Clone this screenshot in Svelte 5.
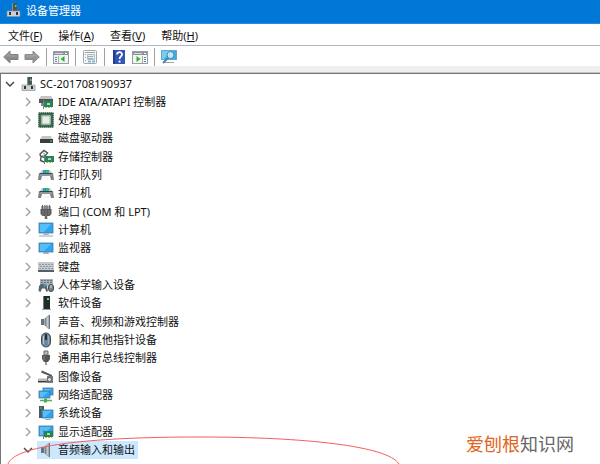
<script lang="ts">
  type Device = { icon: string; label: string };

  const menus = [
    { text: '文件', key: 'F' },
    { text: '操作', key: 'A' },
    { text: '查看', key: 'V' },
    { text: '帮助', key: 'H' }
  ];

  const toolGroups = [
    [
      { icon: 'back', label: '后退' },
      { icon: 'forward', label: '前进' }
    ],
    [{ icon: 'console', label: '显示/隐藏控制台树' }],
    [{ icon: 'properties', label: '属性' }],
    [
      { icon: 'help', label: '帮助' },
      { icon: 'action', label: '显示/隐藏操作窗格' }
    ],
    [{ icon: 'scan', label: '扫描检测硬件改动' }]
  ];

  const devices: Device[] = [
    { icon: 'ide', label: 'IDE ATA/ATAPI 控制器' },
    { icon: 'cpu', label: '处理器' },
    { icon: 'disk', label: '磁盘驱动器' },
    { icon: 'storage', label: '存储控制器' },
    { icon: 'printer', label: '打印队列' },
    { icon: 'printer', label: '打印机' },
    { icon: 'port', label: '端口 (COM 和 LPT)' },
    { icon: 'computer', label: '计算机' },
    { icon: 'monitor', label: '监视器' },
    { icon: 'keyboard', label: '键盘' },
    { icon: 'hid', label: '人体学输入设备' },
    { icon: 'software', label: '软件设备' },
    { icon: 'speaker', label: '声音、视频和游戏控制器' },
    { icon: 'mouse', label: '鼠标和其他指针设备' },
    { icon: 'usb', label: '通用串行总线控制器' },
    { icon: 'imaging', label: '图像设备' },
    { icon: 'network', label: '网络适配器' },
    { icon: 'system', label: '系统设备' },
    { icon: 'display', label: '显示适配器' },
    { icon: 'speaker', label: '音频输入和输出' }
  ];

  const audio = devices.length - 1;

  let selected = $state(audio);
  let rootOpen = $state(true);
  let audioOpen = $state(true);

  function toggle(index: number) {
    selected = index;
    if (index === audio) audioOpen = !audioOpen;
  }
</script>

{#snippet chevron(open: boolean)}
  <svg class="chevron" class:open viewBox="0 0 10 10" aria-hidden="true">
    {#if open}
      <path d="M1 3l4 4 4-4" />
    {:else}
      <path d="M3 1l4 4-4 4" />
    {/if}
  </svg>
{/snippet}

{#snippet toolIcon(name: string)}
  <svg class="tool-icon" viewBox="0 0 16 16" aria-hidden="true">
    {#if name === 'back'}
      <path d="M.7 8L7 2v3.5h8v5H7V14z" fill="#8b8b8b" stroke="#808080" />
      <path d="M2.5 8L6 4.7V7h8" fill="none" stroke="#a5a5a5" />
    {:else if name === 'forward'}
      <path d="M15.3 8L9 2v3.5H1v5h8V14z" fill="#949494" stroke="#898989" />
      <path d="M2 7h8V4.7L13.5 8" fill="none" stroke="#adadad" />
    {:else if name === 'console' || name === 'action'}
      <rect x=".5" y="2.5" width="15" height="12" fill="#f4f4f2" stroke="#9b9ea0" />
      <path d="M1 3h14v3H1z" fill="#8d9499" />
      <path d="M2 4.5h8" stroke="#d5dade" />
      <path d="M12 4.5h2" stroke="#fff" />
      {#if name === 'console'}
        <path d="M5.5 7v7" stroke="#aaa" />
        <path d="M2 8.5h2M2 10.5h2M2 12.5h2" stroke="#4e88bd" />
        <path d="M11.5 7v6L7.5 10z" fill="#28b52b" />
      {:else}
        <path d="M10.5 7v7" stroke="#aaa" />
        <path d="M12 8.5h2M12 10.5h2M12 12.5h2" stroke="#4e88bd" />
        <path d="M4.5 7v6l4-3z" fill="#28b52b" />
      {/if}
    {:else if name === 'properties'}
      <rect x="1.5" y="1.5" width="13" height="13" rx="1" fill="#f8f8f8" stroke="#a2a7a9" />
      <path d="M3 3.5h10M3 5.5h1M3 8.5h1M3 11.5h1" stroke="#9aa6ac" />
      <path d="M5.5 5.5h7v5h-7z" fill="#e3edf2" stroke="#b4bdc2" />
      <path d="M6 7.5h5M6 9.5h5" stroke="#a0aab0" />
      <path d="M6 12.5h3M10 12.5h3" stroke="#6fc0e3" stroke-width="2" />
    {:else if name === 'help'}
      <path d="M2 1h12v14H2z" fill="#3155b7" />
      <path d="M2 1h2v14H2z" fill="#233c8c" />
      <path d="M6 5.5C6 2.4 11.3 2.5 11 5.6 10.8 7.6 8.6 7.2 8.6 10M8.6 11.5v2" fill="none" stroke="#fff" stroke-width="1.8" />
    {:else}
      <path d="M.5 1.5h15v9H.5z" fill="#3caee5" stroke="#6ba4bf" />
      <path d="M1 2h9l-7 8H1z" fill="#75cdf2" />
      <path d="M3 13.5h10" stroke="#9aa9b0" />
      <path d="M7 9l-5 5" stroke="#418ab0" stroke-width="2" />
      <circle cx="9.5" cy="6" r="3.5" fill="#bce7fa" stroke="#438daf" />
    {/if}
  </svg>
{/snippet}

{#snippet screen(x: number, y: number, w: number, h: number)}
  <rect {x} {y} width={w} height={h} fill="#2ea4ee" stroke="#47799b" stroke-width=".8" />
  <path d="M{x + 1} {y + 1}h{w - 3}l{-w / 2} {h - 2}H{x + 1}z" fill="#58bdfb" />
{/snippet}

{#snippet card(x: number, y: number)}
  <path d="M{x} {y}h9v6H{x}z" fill="#26835b" />
  <path d="M{x - .5} {y - 1}v9" stroke="#71817b" />
  <path d="M{x + 3} {y + 2}h3v2h-3z" fill="#a6d9b4" />
  <path d="M{x + 1} {y + 6.5}h7" stroke="#d5ab42" stroke-dasharray="2 1" />
{/snippet}

{#snippet deviceIcon(name: string)}
  <svg class="device-icon" viewBox="0 0 16 16" aria-hidden="true">
    {#if name === 'root'}
      <path d="M7 1h5v9H7z" fill="#4d5357" />
      <path d="M7.5 1v9" stroke="#8b9295" />
      <path d="M10 3h1.5v2H10z" fill="#48db6d" />
      <path d="M2 9h13v5.5H2z" fill="#ced1d3" stroke="#8c9194" stroke-width=".7" />
      <path d="M4 10h2v3H4zM11 10h2v3h-2z" fill="#303538" />
    {:else if name === 'ide'}
      <path d="M3 2h10l2 3H1z" fill="#c2c5c4" />
      <path d="M1 5h14v4H1z" fill="#505653" />
      <path d="M3 9h4v3H3z" fill="#858b88" />
      {@render card(6, 7)}
    {:else if name === 'cpu'}
      <rect x="2" y="2" width="12" height="12" fill="#dfe4df" stroke="#3e6e50" stroke-width="3" />
      <rect x="1" y="1" width="14" height="14" fill="none" stroke="#284f36" stroke-dasharray="1 1" />
      <rect x="4" y="4" width="8" height="8" fill="#e9ecea" stroke="#a5bbaa" />
    {:else if name === 'disk'}
      <path d="M4 6h9l2 4H2z" fill="#c4c5c5" />
      <path d="M2 9h13v4H2z" fill="#3b3e40" />
      <path d="M12 11h2" stroke="#50dd6c" />
    {:else if name === 'storage'}
      <path d="M2 5l4-3.5L9.5 4 6 8.5 2.5 7zM3 8l-.5 3.5L6 13" fill="none" stroke="#4c5351" stroke-width="1.4" />
      <path d="M5 4l2 1-3 2" fill="none" stroke="#a0a6a4" />
      {@render card(7, 7)}
    {:else if name === 'printer'}
      <path d="M4 3h8l2 3H2z" fill="#c3c8c9" />
      <path d="M5 3h3v3H5z" fill="#2698de" />
      <path d="M8 3h3v3H8z" fill="#34b96b" />
      <path d="M1 6h14l1 7h-3l-1-4H4l-1 4H0z" fill="#7b8184" />
      <path d="M2 6h12v1H2z" fill="#3d4447" />
      <path d="M2 8h12" stroke="#a9afb1" />
      <path d="M4.5 9.500h7l1 3.500h-9z" fill="#f8f8f8" />
    {:else if name === 'port'}
      <path d="M3 2h10v3H3z" fill="#aaa" />
      <path d="M4.5 1v4M7 1v4M9 1v4M11.5 1v4" stroke="#626262" />
      <path d="M2.5 5h11v5l-2 2h-7l-2-2z" fill="#5b5b5b" />
      <path d="M5 6v5M8 6v6M11 6v5" stroke="#7c7c7c" />
      <path d="M8 12v3" stroke="#666" stroke-width="2.5" />
    {:else if name === 'computer'}
      {@render screen(1, 1, 14, 10)}
      <path d="M6 11h4l1 2H5z" fill="#a6b4bd" />
      <path d="M1 14h14" stroke="#8ba9bd" />
    {:else if name === 'monitor'}
      {@render screen(1, 3, 14, 9)}
      <path d="M6 12h4l1 2H5z" fill="#9eacb5" />
    {:else if name === 'keyboard'}
      <path d="M0 3h16v8H0z" fill="#c5cacf" />
      <path d="M1 5.5h14M2 7.5h13M1 9.5h14" stroke="#929ba3" stroke-dasharray="2 1" />
      <path d="M0 11h16v2H0z" fill="#555f67" />
    {:else if name === 'hid'}
      <path d="M2 2h13v7H2z" fill="#a9b0b5" />
      <path d="M3 3.5h11M3 5.5h11" stroke="#6b757c" stroke-dasharray="2 1" />
      <path d="M1 9l2-2h4l2 2 1 5-1.5 1L7 11.5H4L2.5 15 .5 14z" fill="#5b6269" />
      <rect x="10.5" y="7.5" width="5" height="7" rx="2.5" fill="#75818b" stroke="#434b52" />
      <path d="M5 6l3 2-2 3z" fill="#2aa8db" />
      <path d="M13 8v3" stroke="#dfe5e9" />
    {:else if name === 'software'}
      <path d="M5 1h7v13H5z" fill="#262c2a" />
      <path d="M5 1h1v13H5z" fill="#777d7b" />
      <path d="M9 3h2v2H9z" fill="#45e36c" />
      <path d="M4 14.5h9" stroke="#9da2a0" />
    {:else if name === 'speaker'}
      <path d="M3 5h3v6H3z" fill="#67747b" />
      <path d="M6 5l5-4.5v15L6 11z" fill="#a3adb3" />
      <path d="M7.5 4v8" stroke="#7c878d" />
      <path d="M11.5 1v14" stroke="#68747b" />
      <path d="M9.5 3v10" stroke="#c2c9cd" />
    {:else if name === 'mouse'}
      <rect x="3.5" y="1" width="9" height="14" rx="4.5" fill="#71879a" stroke="#3f4d58" />
      <path d="M5.5 4v8" stroke="#b8cad8" />
      <path d="M8 2v6" stroke="#26323b" stroke-width="2" />
      <path d="M10.5 4v8" stroke="#96a8b6" />
    {:else if name === 'usb'}
      <path d="M6 1h4v4H6z" fill="#bbb" stroke="#666" />
      <path d="M4 5h8v4l-2 3H6L4 9z" fill="#555" />
      <path d="M6 6v4" stroke="#858585" />
      <path d="M8 12v3" stroke="#777" stroke-width="1.5" />
    {:else if name === 'imaging'}
      <path d="M4 1.5L14 6v2L3 3.5z" fill="#54595b" />
      <path d="M0 9.5h9V13H0z" fill="#b5b9ba" />
      <path d="M0 12h10v1.5H0z" fill="#383d3f" />
      <path d="M9 7h6v7H9z" fill="#747b7e" />
      <circle cx="11.5" cy="10.5" r="2" fill="#e1e5e6" stroke="#555b5e" />
    {:else if name === 'network'}
      {@render screen(5, 1, 10, 7)}
      {@render screen(1, 4, 11, 7)}
      <path d="M2 13.5h12" stroke="#50ac61" stroke-width="1.5" />
      <path d="M6 11.5h3v4H6z" fill="#4aaa54" />
    {:else if name === 'system'}
      <path d="M1 1h5v12H1z" fill="#4c5960" />
      <path d="M2 3h2" stroke="#52cf73" />
      {@render screen(4, 5, 11, 8)}
      <path d="M7 14.5h6" stroke="#98aeb9" />
    {:else if name === 'display'}
      {@render screen(1, 2, 14, 10)}
      {@render card(6, 7)}
    {/if}
  </svg>
{/snippet}

<div class="window">
  <header class="title-bar">
    {@render deviceIcon('root')}
    <h1>设备管理器</h1>
  </header>

  <nav class="menu-bar">
    {#each menus as menu}
      <button>{menu.text}(<u>{menu.key}</u>)</button>
    {/each}
  </nav>

  <div class="toolbar" role="toolbar" aria-label="工具栏">
    {#each toolGroups as group}
      <div class="tool-group">
        {#each group as tool}
          <button aria-label={tool.label} title={tool.label}>{@render toolIcon(tool.icon)}</button>
        {/each}
      </div>
    {/each}
  </div>

  <main>
    <button class="row root" onclick={() => (rootOpen = !rootOpen)}>
      {@render chevron(rootOpen)}
      <span class="item">
        {@render deviceIcon('root')}
        <span>SC-201708190937</span>
      </span>
    </button>
    {#if rootOpen}
      <ul>
        {#each devices as device, i}
          <li>
            <button class="row" class:selected={selected === i} onclick={() => toggle(i)}>
              {@render chevron(i === audio && audioOpen)}
              <span class="item">
                {@render deviceIcon(device.icon)}
                <span>{device.label}</span>
              </span>
            </button>
          </li>
        {/each}
      </ul>
    {/if}
  </main>

  <svg class="marker" viewBox="0 0 400 30" aria-hidden="true">
    <path d="M8 30C14 12 85 3 200 3c105 0 188 9 199 27" />
  </svg>
  <div class="watermark"><span>爱刨根</span>知识网</div>
</div>

<style>
  :global(body) {
    margin: 0;
    overflow: hidden;
  }

  .window {
    position: relative;
    display: flex;
    flex-direction: column;
    height: 100vh;
    overflow: hidden;
    background: #fff;
    color: #111;
    font-family: "Noto Sans", "Noto Sans CJK SC", sans-serif;
    font-size: 11px;
  }

  button {
    margin: 0;
    padding: 0;
    border: 0;
    background: none;
    color: inherit;
    font: inherit;
  }

  svg {
    display: block;
    flex: none;
  }

  .title-bar {
    display: flex;
    align-items: center;
    gap: 5px;
    flex: none;
    height: 24px;
    padding: 0 5px 4px;
    box-sizing: border-box;
    border-bottom: 1px solid #2a8adf;
    background: #0078d7;
    color: #fff;
  }

  h1 {
    margin: 0;
    font-size: 11px;
    font-weight: 400;
  }

  .menu-bar {
    display: flex;
    align-items: center;
    gap: 16px;
    flex: none;
    height: 21px;
    padding: 0 8px;
    border-bottom: 1px solid #b3b6bf;
  }

  .toolbar {
    display: flex;
    align-items: center;
    flex: none;
    height: 20px;
    padding: 2px 3px 0;
    box-sizing: border-box;
  }

  .tool-group {
    display: flex;
    gap: 5px;
    padding: 1px 6px;
  }

  .tool-group:first-child {
    padding-left: 0;
  }

  .tool-group + .tool-group {
    border-left: 1px solid #a0a0a0;
  }

  .tool-icon {
    width: 16px;
    height: 16px;
  }

  main {
    flex: 1;
    min-height: 0;
    margin-top: 7px;
    padding-top: 1px;
    border-top: 1px solid #777;
    border-left: 1px solid #777;
    box-shadow: 0 -1px #c4c4c4, 0 -7px #efefef;
  }

  ul {
    margin: 0;
    padding: 0;
    list-style: none;
  }

  .row {
    display: flex;
    align-items: center;
    height: 18px;
    padding-left: 22px;
    line-height: 16px;
    white-space: nowrap;
  }

  .row.root {
    padding-left: 4px;
  }

  li:nth-child(3n) {
    padding-bottom: 1px;
  }

  .chevron {
    width: 10px;
    height: 10px;
    margin-right: 4px;
    fill: none;
    stroke: #a0a0a0;
    stroke-width: 1.4;
  }

  .chevron.open {
    stroke: #444;
  }

  .device-icon {
    width: 16px;
    height: 16px;
  }

  .item {
    display: flex;
    align-items: center;
    gap: 4px;
    height: 18px;
    padding: 0 3px 0 1px;
  }

  .selected .item {
    background: #cce8ff;
  }

  .marker {
    position: absolute;
    bottom: 0;
    left: 0;
    width: 400px;
    height: 30px;
    fill: none;
    stroke: #f05f5f;
    pointer-events: none;
  }

  .watermark {
    position: absolute;
    right: 26px;
    bottom: 8px;
    color: #666;
    font-size: 18px;
    line-height: 24px;
  }

  .watermark span {
    color: #e2651d;
  }
</style>
